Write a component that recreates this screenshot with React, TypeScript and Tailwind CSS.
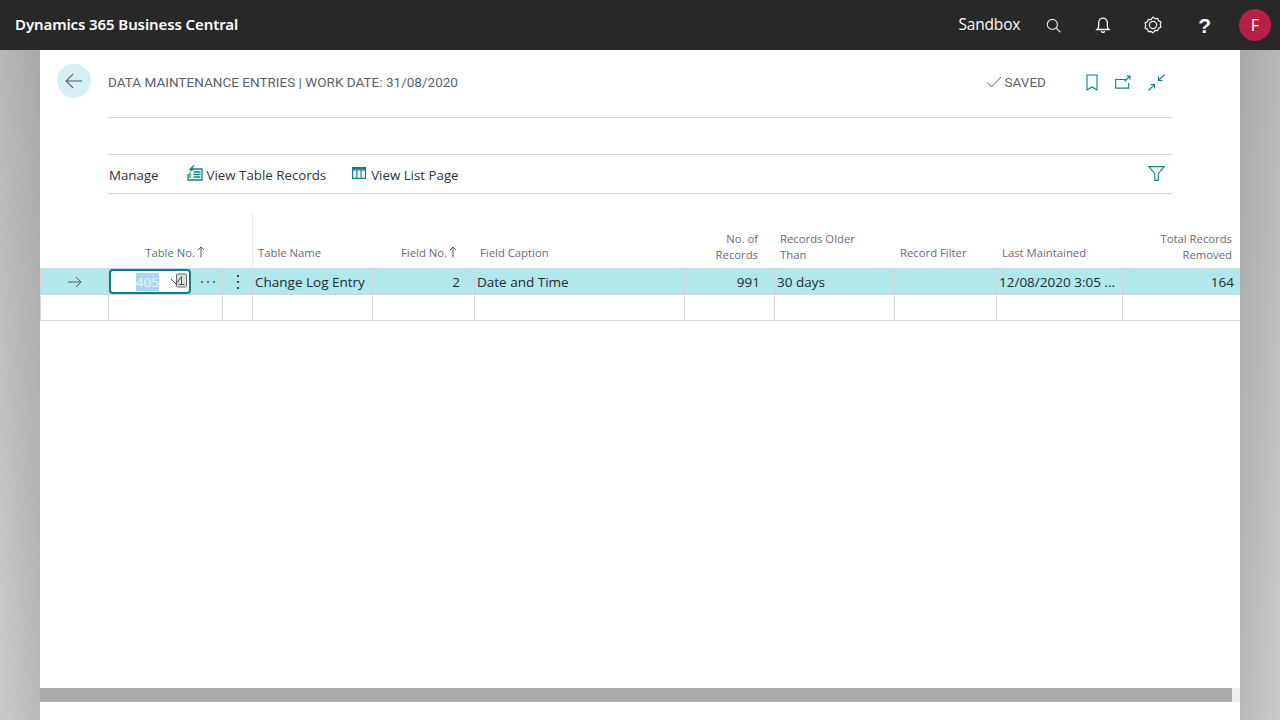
import React from "react";

const teal = "#0f7f8a";

function HeaderCell({ lines, right, sort, className = "" }: { lines: string[]; right?: boolean; sort?: boolean; className?: string }) {
  return (
    <div className={`flex flex-col justify-end border-b border-[#d4d4d8] text-[11.3px] leading-[16px] text-[#666c73] ${lines.length > 1 ? "pb-[5px]" : "pb-[7px]"} ${right ? "items-end" : "items-start pl-[6px]"} ${className}`}>
      {lines.map((l, i) => (
        <div key={i} className="flex items-center whitespace-nowrap">
          {l}
          {sort && (
            <svg width="8" height="12" viewBox="0 0 8 12" className="ml-[2px] mb-[2px]" fill="none" stroke="#555b61" strokeWidth="1">
              <path d="M4 11.5V1M1 4l3-3 3 3" />
            </svg>
          )}
        </div>
      ))}
    </div>
  );
}

function Cell({ children, right, first, className = "" }: { children?: React.ReactNode; right?: boolean; first?: boolean; className?: string }) {
  return (
    <div className={`flex items-center h-[26px] border-b border-[#d4d4d8] whitespace-nowrap overflow-hidden text-[13.5px] text-[#252a30] ${typeof children === "string" ? "pt-[1px]" : ""} ${first ? "" : "border-l"} ${right ? "justify-end" : "pl-[2px]"} ${className}`}>
      {children}
    </div>
  );
}

export default function App() {
  const hi = "bg-[#b2e8ec]";
  const titleCls = "text-[13.5px] leading-[18px] tracking-[0.02px] text-[#5a626b] font-['Roboto',sans-serif]";
  return (
    <div className="w-[1280px] h-[720px] flex flex-col overflow-hidden bg-white font-['Open_Sans','Noto_Sans',sans-serif]">
      {/* top bar */}
      <div className="h-[50px] shrink-0 bg-[#282828] flex items-center text-white">
        <div className="pl-[15px] pb-[2px] text-[15px] font-semibold font-['Noto_Sans',sans-serif] tracking-[-0.1px]">Dynamics 365 Business Central</div>
        <div className="ml-auto flex items-center">
          <span className="text-[15.5px] mr-[26px] tracking-[-0.2px]">Sandbox</span>
          <svg width="15" height="15" viewBox="0 0 16 16" fill="none" stroke="#e8e8e8" strokeWidth="1.2" className="mr-[34px]">
            <circle cx="6.8" cy="6.8" r="5.4" />
            <path d="M10.6 10.6l4.6 4.6" />
          </svg>
          <svg width="16" height="18" viewBox="0 0 16 18" fill="none" stroke="#fff" strokeWidth="1.3" className="mr-[33px]">
            <path d="M2 13.5h12c-1.2-1-1.7-2-1.7-4V6.5a4.3 4.3 0 0 0-8.6 0v3c0 2-.5 3-1.7 4z" />
            <path d="M6.3 15.2a1.8 1.8 0 0 0 3.4 0" />
          </svg>
          <svg width="18" height="18" viewBox="0 0 18 18" fill="none" stroke="#f2f2f2" strokeWidth="1.2" className="mr-[36px]">
            <path d="M9 1l2 1.6 2.6-.3 1 2.4 2.3 1.2-.6 2.6.6 2.6-2.3 1.2-1 2.4-2.6-.3L9 16.9l-2-1.5-2.6.3-1-2.4-2.3-1.2.6-2.6-.6-2.6 2.3-1.2 1-2.4 2.6.3z" />
            <circle cx="9" cy="9" r="3.6" />
          </svg>
          <span className="text-[21px] font-bold mr-[28px] font-['Liberation_Sans',sans-serif] leading-none">?</span>
          <div className="w-[32px] h-[32px] rounded-full bg-[#b81f48] flex items-center justify-center text-[16px] mr-[9px]">F</div>
        </div>
      </div>

      {/* body */}
      <div className="flex-1 flex min-h-0">
        <div className="w-[40px] shrink-0 bg-gradient-to-bl from-[#a8a8a8] to-[#cacaca]" />
        <div className="w-[1200px] shrink-0 bg-white flex flex-col">
          {/* page header */}
          <div className="h-[68px] shrink-0 flex">
            <div className="w-[68px] shrink-0 pl-[17px] pt-[14px]">
              <div className="w-[34px] h-[34px] rounded-full bg-[#d6eff2] flex items-center justify-center">
                <svg width="18" height="16" viewBox="0 0 18 16" fill="none" stroke="#555b61" strokeWidth="1.1">
                  <path d="M17 8H1.2M8 1.2L1.2 8 8 14.8" />
                </svg>
              </div>
            </div>
            <div className="w-[1064px] shrink-0 border-b border-[#d4d4d4] flex items-start pt-[23px]">
              <span className={titleCls}>DATA MAINTENANCE ENTRIES | WORK DATE: 31/08/2020</span>
              <div className="ml-auto flex items-start">
                <svg width="16" height="12" viewBox="0 0 16 12" fill="none" stroke="#5f6770" strokeWidth="1" className="mt-[3px] mr-[3px]">
                  <path d="M1 6.5l4.5 4.5L15 1" />
                </svg>
                <span className={`${titleCls} mr-[40px]`}>SAVED</span>
                <svg width="12" height="17" viewBox="0 0 12 17" fill="none" stroke={teal} strokeWidth="1.1" className="mt-[1px] mr-[17px]">
                  <path d="M1 1h10v15l-5-3-5 3z" />
                </svg>
                <svg width="16" height="14" viewBox="0 0 16 14" fill="none" stroke={teal} strokeWidth="1.1" className="mt-[2px] mr-[17px]">
                  <path d="M11 4.5H.7v8.6h13V8" />
                  <path d="M9.5 6.5L15 1M11.5 1H15v3.5" />
                </svg>
                <svg width="17" height="17" viewBox="0 0 17 17" fill="none" stroke={teal} strokeWidth="1.1" className="mt-[1px] mr-[7px]">
                  <path d="M16.5.5L10.5 6.5M10.5 2.5v4h4M.5 16.5l6-6M6.5 14.5v-4h-4" />
                </svg>
              </div>
            </div>
          </div>

          {/* action bar */}
          <div className="ml-[68px] w-[1064px] mt-[36px] h-[40px] shrink-0 border-y border-[#d4d4d4] flex items-center text-[13.3px] text-[#30363c] pl-[1px]">
            <span className="mr-[28px] pt-[3px]">Manage</span>
            <svg width="16" height="16" viewBox="0 0 16 16" fill="none" stroke={teal} strokeWidth="1.3" className="mr-[4px] mb-[3px]">
              <path d="M5 4h10v11H1V9" />
              <path d="M6.5 7h7M6.5 9.5h7M6.5 12h7M3 8v5" />
              <path d="M6.5 0L1.5 5h2.8L1.5 8.5 7.5 4H5L7.5 0z" fill={teal} stroke="none" />
            </svg>
            <span className="mr-[26px] pt-[3px]">View Table Records</span>
            <svg width="14" height="12" viewBox="0 0 14 12" fill="none" stroke={teal} strokeWidth="1.2" className="mr-[5px] mb-[2px]">
              <path d="M.6.6h12.8v10.8H.6zM.6 3h12.8M4.9 3v8.4M9.1 3v8.4" />
              <path d="M.6 1.6h12.8" strokeWidth="2" />
            </svg>
            <span className="pt-[3px]">View List Page</span>
            <svg width="17" height="15" viewBox="0 0 17 15" fill="none" stroke={teal} strokeWidth="1.1" className="ml-auto mr-[7px] mb-[2px]">
              <path d="M.8.6h15.4l-6 7v6.8H6.8V7.6z" />
            </svg>
          </div>

          {/* grid */}
          <div className="mt-[19px] grid grid-cols-[68px_114px_30px_120px_102px_210px_90px_120px_102px_126px_118px] shrink-0">
            <div className="h-[56px] border-b border-[#d4d4d8]" />
            <HeaderCell lines={["Table No."]} right sort className="pr-[17px]" />
            <div className="border-b border-[#d4d4d8]" />
            <HeaderCell lines={["Table Name"]} className="border-l border-l-[#e6e6e6] !pl-[5px]" />
            <HeaderCell lines={["Field No."]} right sort className="pr-[17px]" />
            <HeaderCell lines={["Field Caption"]} />
            <HeaderCell lines={["No. of", "Records"]} right className="pr-[16px]" />
            <HeaderCell lines={["Records Older", "Than"]} />
            <HeaderCell lines={["Record Filter"]} />
            <HeaderCell lines={["Last Maintained"]} />
            <HeaderCell lines={["Total Records", "Removed"]} right className="pr-[8px]" />

            <Cell first className={`${hi} border-l !pl-[27px]`}>
              <svg width="14" height="12" viewBox="0 0 14 12" fill="none" stroke="#555b61" strokeWidth="1">
                <path d="M0 6h13M8 1l5 5-5 5" />
              </svg>
            </Cell>
            <Cell className={`${hi} !pl-0`}>
              <div className="relative w-[82px] h-[25px] rounded-[4px] border-2 border-[#0a7f8c] bg-white flex items-center justify-end pr-[30px]">
                <span className="bg-[#a9d8f5] text-[#eef6fb] leading-[18px] text-[13.5px]">405</span>
                <svg width="18" height="16" viewBox="0 0 18 16" fill="none" className="absolute right-[1px] top-[2px]">
                  <rect x="6.5" y="1" width="10" height="13" rx="1" stroke="#6b6b6b" fill="#dcdcdc" />
                  <path d="M11.5 3.5v8M8.5 11.5h6" stroke="#555" />
                  <path d="M1 6l5 5 5-7" stroke="#555" />
                </svg>
              </div>
              <span className="ml-[10px] flex gap-[4px]">
                <i className="w-[2px] h-[2px] rounded-full bg-[#3f4650]" />
                <i className="w-[2px] h-[2px] rounded-full bg-[#3f4650]" />
                <i className="w-[2px] h-[2px] rounded-full bg-[#3f4650]" />
              </span>
            </Cell>
            <Cell className={`${hi} justify-center !pl-0`}>
              <span className="flex flex-col gap-[4px]">
                <i className="w-[2px] h-[2px] bg-[#3f4650]" />
                <i className="w-[2px] h-[2px] bg-[#3f4650]" />
                <i className="w-[2px] h-[2px] bg-[#3f4650]" />
              </span>
            </Cell>
            <Cell className={hi}>Change Log Entry</Cell>
            <Cell right className={`${hi} pr-[14px]`}>2</Cell>
            <Cell className={hi}>Date and Time</Cell>
            <Cell right className={`${hi} pr-[14px]`}>991</Cell>
            <Cell className={hi}>30 days</Cell>
            <Cell className={hi} />
            <Cell className={hi}>12/08/2020 3:05 ...</Cell>
            <Cell right className={`${hi} pr-[6px]`}>164</Cell>

            <Cell first className="border-l" />
            <Cell />
            <Cell />
            <Cell />
            <Cell />
            <Cell />
            <Cell />
            <Cell />
            <Cell />
            <Cell />
            <Cell />
          </div>

          <div className="flex-1" />
          <div className="h-[14px] shrink-0 flex mb-[18px] bg-[#eeeeee]">
            <div className="w-[1192px] bg-[#ababab]" />
          </div>
        </div>
        <div className="w-[40px] shrink-0 bg-gradient-to-br from-[#a8a8a8] to-[#cacaca]" />
      </div>
    </div>
  );
}
